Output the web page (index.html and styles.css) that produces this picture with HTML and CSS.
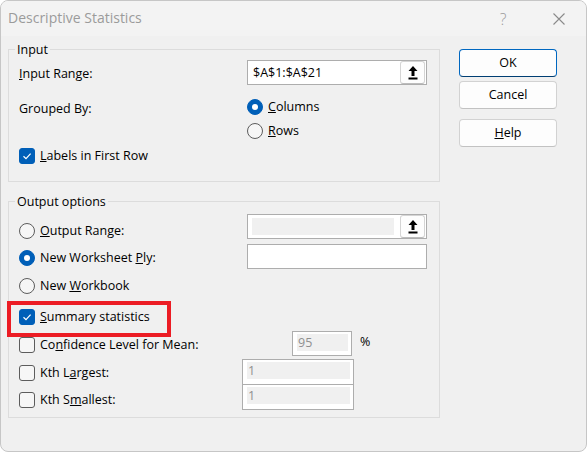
FILE: index.html
```html
<!DOCTYPE html>
<html>
<head>
<meta charset="utf-8">
<title>Descriptive Statistics</title>
<link rel="stylesheet" href="styles.css">
</head>
<body>
<div class="window">
  <div class="titlebar">
    <span class="title">Descriptive Statistics</span>
    <span class="tb-help">?</span>
    <span class="tb-close"><svg width="12" height="12" viewBox="0 0 12 12"><path d="M0.5 0.5 L11.5 11.5 M11.5 0.5 L0.5 11.5" stroke="#8a8a8a" stroke-width="1.1" fill="none"/></svg></span>
  </div>
  <div class="main">
    <div class="groups">
      <fieldset class="group group-input">
        <legend>Input</legend>
        <div class="irow">
          <span class="lbl lbl-range"><u>I</u>nput Range:</span>
          <div class="refedit">
            <span class="refval">$A$1:$A$21</span>
            <span class="pick"><svg width="10" height="14" viewBox="0 0 10 14"><polygon points="5,0 9.5,5 6.5,5 6.5,10 3.5,10 3.5,5 0.5,5" fill="#000"/><rect x="0.5" y="11.5" width="9" height="2" fill="#000"/></svg></span>
          </div>
        </div>
        <div class="irow grouped">
          <span class="lbl lbl-grouped">Grouped By:</span>
          <div class="radios">
            <div class="opt"><span class="radio on"></span><span class="otext"><u>C</u>olumns</span></div>
            <div class="opt"><span class="radio"></span><span class="otext"><u>R</u>ows</span></div>
          </div>
        </div>
        <div class="opt labels-row"><span class="check on"><svg width="14" height="14" viewBox="0 0 14 14"><path d="M3.5 7.2 L6 9.6 L10.6 4.6" stroke="#fff" stroke-width="1.2" fill="none"/></svg></span><span class="otext"><u>L</u>abels in First Row</span></div>
      </fieldset>

      <fieldset class="group group-output">
        <legend>Output options</legend>
        <div class="orow r1">
          <div class="opt w-field"><span class="radio"></span><span class="otext"><u>O</u>utput Range:</span></div>
          <div class="refedit">
            <span class="disabled-box wide"></span>
            <span class="pick"><svg width="10" height="14" viewBox="0 0 10 14"><polygon points="5,0 9.5,5 6.5,5 6.5,10 3.5,10 3.5,5 0.5,5" fill="#000"/><rect x="0.5" y="11.5" width="9" height="2" fill="#000"/></svg></span>
          </div>
        </div>
        <div class="orow r2">
          <div class="opt w-field"><span class="radio on"></span><span class="otext">New Worksheet <u>P</u>ly:</span></div>
          <div class="textbox"></div>
        </div>
        <div class="opt r3"><span class="radio"></span><span class="otext">New <u>W</u>orkbook</span></div>
        <div class="opt r4 summary">
          <span class="check on"><svg width="14" height="14" viewBox="0 0 14 14"><path d="M3.5 7.2 L6 9.6 L10.6 4.6" stroke="#fff" stroke-width="1.2" fill="none"/></svg></span><span class="otext"><u>S</u>ummary statistics</span>
          <span class="highlight"></span>
        </div>
        <div class="orow r5">
          <div class="opt w-conf"><span class="check"></span><span class="otext">Co<u>n</u>fidence Level for Mean:</span></div>
          <div class="smallbox conf"><span class="disabled-box">95</span></div>
          <span class="pct">%</span>
        </div>
        <div class="orow r6">
          <div class="opt w-kth"><span class="check"></span><span class="otext">Kth L<u>a</u>rgest:</span></div>
          <div class="smallbox kth"><span class="disabled-box">1</span></div>
        </div>
        <div class="orow r7">
          <div class="opt w-kth"><span class="check"></span><span class="otext">Kth S<u>m</u>allest:</span></div>
          <div class="smallbox kth"><span class="disabled-box">1</span></div>
        </div>
      </fieldset>
    </div>

    <div class="buttons">
      <div class="btn default">OK</div>
      <div class="btn">Cancel</div>
      <div class="btn help"><u>H</u>elp</div>
    </div>
  </div>
</div>
</body>
</html>
```

FILE: styles.css
```css
html, body {
  margin: 0;
  padding: 0;
  background: #ffffff;
}

body {
  font-family: "Open Sans", "Noto Sans", sans-serif;
  font-size: 12.5px;
  color: #000;
}

.window {
  width: 587px;
  height: 452px;
  box-sizing: border-box;
  border: 1px solid #c6c6c6;
  border-radius: 8px;
  background: #f0f0f0;
  overflow: hidden;
}

.titlebar {
  height: 35px;
  background: #f3f3f3;
  display: flex;
  align-items: center;
  padding: 0 4px 0 7px;
}

.title {
  flex: 1;
  font-size: 14px;
  color: #9b9b9b;
  line-height: 20px;
  padding-bottom: 1px;
}

.tb-help {
  width: 46px;
  text-align: center;
  font-size: 16px;
  font-weight: 300;
  color: #9b9b9b;
  line-height: 20px;
  margin-right: 10px;
}

.tb-close {
  width: 46px;
  display: flex;
  justify-content: center;
  align-items: center;
  height: 20px;
}

.main {
  display: flex;
  padding: 5px 0 0 7px;
}

.groups {
  width: 432px;
  display: flex;
  flex-direction: column;
}

.group {
  margin: 0;
  width: 432px;
  box-sizing: border-box;
  border: 1px solid #dcdcdc;
  min-width: 0;
}

.group legend {
  padding: 0 2px;
  margin-left: -4px;
  line-height: 17px;
}

.group-input {
  padding: 2px 10px 13px 10px;
}

.group-output {
  margin-top: 11px;
  padding: 4px 10px 7px 10px;
}

.irow {
  display: flex;
  align-items: flex-start;
}

.lbl {
  flex: 0 0 228px;
  line-height: 24px;
  margin-top: 2px;
}

.grouped {
  margin-top: 9px;
}

.radios {
  display: flex;
  flex-direction: column;
}

.opt {
  display: flex;
  align-items: center;
  height: 24px;
}

.otext {
  margin-left: 5px;
  line-height: 24px;
  white-space: nowrap;
}

.labels-row {
  margin-top: 1px;
}

.radio {
  width: 16px;
  height: 16px;
  box-sizing: border-box;
  border-radius: 50%;
  border: 1px solid #5c5c5c;
  background: #f6f6f6;
  flex: 0 0 auto;
}

.radio.on {
  background: #005fb8;
  border-color: #005fb8;
  display: flex;
  align-items: center;
  justify-content: center;
}

.radio.on::after {
  content: "";
  width: 6px;
  height: 6px;
  border-radius: 50%;
  background: #ffffff;
}

.check {
  width: 16px;
  height: 16px;
  box-sizing: border-box;
  border-radius: 3px;
  border: 1px solid #5c5c5c;
  background: #f6f6f6;
  flex: 0 0 auto;
  display: flex;
  align-items: center;
  justify-content: center;
}

.check.on {
  background: #005fb8;
  border-color: #005fb8;
}

.refedit {
  width: 180px;
  height: 25px;
  box-sizing: border-box;
  border: 1px solid #adadad;
  background: #ffffff;
  display: flex;
  align-items: center;
}

.refval {
  padding-left: 5px;
  font-size: 12.5px;
  line-height: 20px;
}

.pick {
  margin-left: auto;
  margin-right: 1px;
  width: 25px;
  height: 23px;
  box-sizing: border-box;
  border: 1px solid #d4d4d4;
  border-bottom-color: #bcbcbc;
  border-radius: 3px;
  background: #fdfdfd;
  display: flex;
  align-items: center;
  justify-content: center;
}

.textbox {
  width: 180px;
  height: 25px;
  box-sizing: border-box;
  border: 1px solid #adadad;
  background: #ffffff;
}

.orow {
  display: flex;
  align-items: flex-start;
}

.w-field {
  flex: 0 0 228px;
}

.w-conf {
  flex: 0 0 273px;
}

.w-kth {
  flex: 0 0 223px;
}

.r1 { height: 25px; }
.r1 .opt { margin-top: 5px; }

.r2 { height: 25px; margin-top: 5px; }
.r2 .opt { margin-top: 2px; }

.r3 { margin-top: 5px; }

.r4 { margin-top: 7px; }

.r5 { height: 25px; margin-top: 2px; }
.r5 .opt { margin-top: 2px; }

.r6 { height: 26px; margin-top: 3px; }
.r6 .opt { margin-top: 2px; }

.r7 { height: 26px; margin-top: -1px; }
.r7 .opt { margin-top: 4px; }

.summary {
  position: relative;
}

.highlight {
  position: absolute;
  left: -12px;
  top: -4px;
  width: 164px;
  height: 36px;
  box-sizing: border-box;
  border: 4px solid #ec1c24;
}

.disabled-box {
  display: block;
  background: #f0f0f0;
  height: 17px;
  line-height: 17px;
  color: #8f8f8f;
  padding-left: 1px;
  box-sizing: border-box;
}

.disabled-box.wide {
  width: 142px;
  margin-left: 4px;
}

.smallbox {
  box-sizing: border-box;
  border: 1px solid #adadad;
  background: #ffffff;
  display: flex;
  flex-direction: column;
}

.smallbox .disabled-box {
  margin: 2px 3px 0 4px;
}

.smallbox.conf {
  width: 60px;
  height: 25px;
}

.smallbox.kth {
  width: 112px;
  height: 26px;
}

.pct {
  margin-left: 8px;
  line-height: 22px;
}

.buttons {
  margin-left: 19px;
  margin-top: 8px;
  display: flex;
  flex-direction: column;
}

.btn {
  width: 98px;
  height: 28px;
  box-sizing: border-box;
  border: 1px solid #d2d2d2;
  border-bottom-color: #c2c2c2;
  border-radius: 4px;
  background: #fdfdfd;
  display: flex;
  align-items: center;
  justify-content: center;
  line-height: 20px;
  margin-bottom: 4px;
}

.btn.default {
  border-color: #0067c0;
  border-bottom-color: #003e73;
}

.btn.help {
  margin-top: 6px;
}
```
